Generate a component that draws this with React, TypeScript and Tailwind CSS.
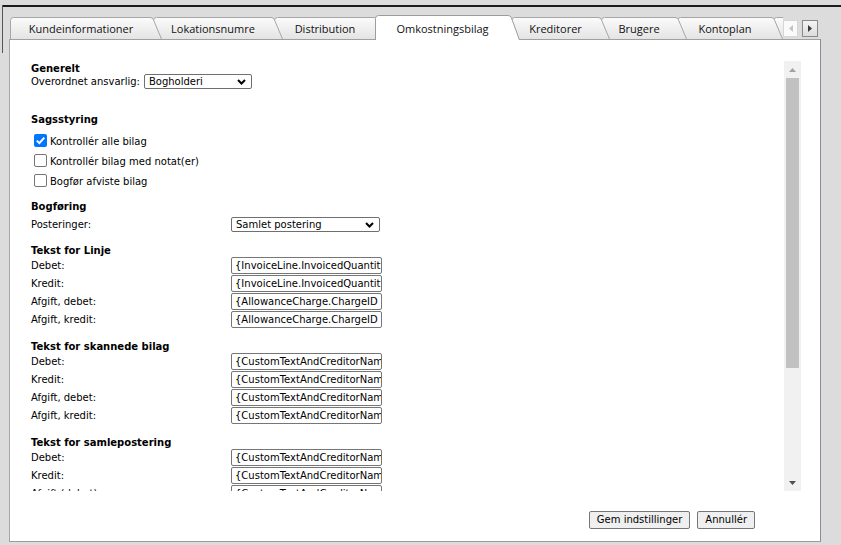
import React from "react";

type TabDef = { label: string; w: number; cls: string; active?: boolean };

const tabs: TabDef[] = [
  { label: "Kundeinformationer", w: 152, cls: "w-[152px] z-[8]" },
  { label: "Lokationsnumre", w: 130, cls: "w-[130px] -ml-[9px] z-[7]" },
  { label: "Distribution", w: 112, cls: "w-[112px] -ml-[9px] z-[6]" },
  { label: "Omkostningsbilag", w: 145, cls: "w-[145px] -ml-[11px] z-[9]", active: true },
  { label: "Kreditorer", w: 99, cls: "w-[99px] -ml-[9px] z-[5]" },
  { label: "Brugere", w: 86, cls: "w-[86px] -ml-[9px] z-[4]" },
  { label: "Kontoplan", w: 106, cls: "w-[106px] -ml-[10px] z-[3]" },
  { label: "", w: 60, cls: "w-[60px] -ml-[10px] z-[2]" },
];

function Tab({ tab, idx }: { tab: TabDef; idx: number }) {
  const h = tab.active ? 25 : 22;
  const w = tab.w;
  const outline = `M0.5 ${h} L0.5 3.5 Q0.5 0.5 3.5 0.5 L${w - 12} 0.5 Q${w - 9.5} 0.5 ${w - 8.7} 2.5 L${w - 0.5} ${h}`;
  return (
    <div
      className={`relative shrink-0 ${tab.cls} ${
        tab.active ? "h-[25px] pt-[3px]" : "h-[22px] mt-[2px] pt-[2px]"
      }`}
    >
      <svg className="absolute inset-0" width={w} height={h}>
        <defs>
          <linearGradient id={`tabg${idx}`} x1="0" y1="0" x2="0" y2="1">
            <stop offset="0" stopColor="#fbfbfb" />
            <stop offset="1" stopColor="#e4e4e4" />
          </linearGradient>
        </defs>
        <path d={outline + " Z"} fill={tab.active ? "#ffffff" : `url(#tabg${idx})`} />
        <path d={outline} fill="none" stroke={tab.active ? "#9c9c9c" : "#a6a6a6"} />
      </svg>
      <div className="relative h-full flex items-center justify-center pr-[10px] font-['Open_Sans',sans-serif] text-[11px] text-[#111] whitespace-nowrap">
        {tab.label}
      </div>
    </div>
  );
}

function Chevron() {
  return (
    <svg width="9" height="6" viewBox="0 0 9 6">
      <polyline points="1,1 4.5,4.5 8,1" fill="none" stroke="#000" strokeWidth="2" />
    </svg>
  );
}

function Select({ value, cls }: { value: string; cls: string }) {
  return (
    <div
      className={`h-[15px] border border-[#6f6f6f] rounded-[2px] bg-white flex items-center justify-between pl-[4px] pr-[5px] ${cls}`}
    >
      <span className="leading-[13px]">{value}</span>
      <Chevron />
    </div>
  );
}

function Check({ checked, label }: { checked?: boolean; label: string }) {
  return (
    <div className="h-[20px] flex items-start">
      {checked ? (
        <div className="ml-[3px] mt-[3.5px] w-[13px] h-[13px] rounded-[2px] bg-[#0075ff] flex items-center justify-center">
          <svg width="13" height="13" viewBox="0 0 13 13">
            <path d="M2.8 6.6 L5.4 9.1 L10.3 3.6" fill="none" stroke="#fff" strokeWidth="2" />
          </svg>
        </div>
      ) : (
        <div className="ml-[3px] mt-[3.5px] w-[13px] h-[13px] rounded-[2px] border border-[#767676] bg-white" />
      )}
      <span className="ml-[3px] mt-[5px] leading-[13px]">{label}</span>
    </div>
  );
}

function Heading({ children, cls = "" }: { children: React.ReactNode; cls?: string }) {
  return <div className={`h-[12px] pt-[1px] font-bold leading-[12px] ${cls}`}>{children}</div>;
}

function Field({ label, value }: { label: string; value: string }) {
  return (
    <div className="h-[18px] flex items-start">
      <span className="w-[200px] mt-[3px] leading-[13px] shrink-0">{label}</span>
      <div className="w-[151px] h-[17px] mt-[0.5px] border border-[#767676] rounded-[2px] bg-white px-[3px] overflow-hidden whitespace-nowrap leading-[15px]">
        {value}
      </div>
    </div>
  );
}

const linje = [
  ["Debet:", "{InvoiceLine.InvoicedQuantity} x {InvoiceLine.Item.Name}"],
  ["Kredit:", "{InvoiceLine.InvoicedQuantity} x {InvoiceLine.Item.Name}"],
  ["Afgift, debet:", "{AllowanceCharge.ChargeID  {AllowanceCharge.Reason}}"],
  ["Afgift, kredit:", "{AllowanceCharge.ChargeID  {AllowanceCharge.Reason}}"],
];

const custom = "{CustomTextAndCreditorName}";

export default function App() {
  return (
    <div className="w-[841px] h-[545px] bg-[#dcdcdc] overflow-hidden relative font-['DejaVu_Sans',sans-serif] text-[10px] text-black">
      <div className="absolute left-[2px] top-[5px] w-px h-[48px] bg-[#555]" />
      <div className="mt-[5px] ml-[2px] border-t-2 border-[#1c1c1c]">
        {/* tab strip */}
        <div className="ml-[8px] mt-[8px] h-[25px] flex relative z-10">
          <div className="w-[773px] h-[25px] flex items-start overflow-hidden">
            {tabs.map((t, i) => (
              <Tab key={i} tab={t} idx={i} />
            ))}
          </div>
          <div className="flex items-start gap-[4px] pt-[5px]">
            <div className="w-[15px] h-[17px] border border-[#d6d6d6] bg-[#fafafa] flex items-center justify-center">
              <svg width="4" height="7" viewBox="0 0 4 7">
                <path d="M4 0 L0 3.5 L4 7 Z" fill="#c4c4c4" />
              </svg>
            </div>
            <div className="w-[16px] h-[17px] border border-[#8a8a8a] bg-gradient-to-b from-[#f4f4f4] to-[#dcdcdc] flex items-center justify-center">
              <svg width="4" height="7" viewBox="0 0 4 7">
                <path d="M0 0 L4 3.5 L0 7 Z" fill="#3c3c3c" />
              </svg>
            </div>
          </div>
        </div>

        {/* panel */}
        <div className="ml-[7px] -mt-[1px] w-[812px] h-[503px] bg-white border border-t-[#a0a0a0] border-l-[#a6a6a6] border-r-[#8b8a9b] border-b-[#9c9c9c] flex flex-col">
          <div className="mt-[21px] h-[430px] flex">
            <div className="flex-1 overflow-hidden pl-[21px] pt-[1px]">
              <Heading>Generelt</Heading>
              <div className="h-[15px] flex items-center">
                <span className="leading-[13px]">Overordnet ansvarlig:</span>
                <Select value="Bogholderi" cls="ml-[4px] w-[108px]" />
              </div>

              <Heading cls="mt-[24px]">Sagsstyring</Heading>
              <div className="mt-[5px]">
                <Check checked label="Kontrollér alle bilag" />
                <Check label="Kontrollér bilag med notat(er)" />
                <Check label="Bogfør afviste bilag" />
              </div>

              <Heading cls="mt-[10px]">Bogføring</Heading>
              <div className="mt-[5px] h-[15px] flex items-center">
                <span className="w-[200px] leading-[13px] shrink-0">Posteringer:</span>
                <Select value="Samlet postering" cls="w-[149px]" />
              </div>

              <Heading cls="mt-[12px]">Tekst for Linje</Heading>
              {linje.map(([l, v]) => (
                <Field key={l} label={l} value={v} />
              ))}

              <Heading cls="mt-[12px]">Tekst for skannede bilag</Heading>
              <Field label="Debet:" value={custom} />
              <Field label="Kredit:" value={custom} />
              <Field label="Afgift, debet:" value={custom} />
              <Field label="Afgift, kredit:" value={custom} />

              <Heading cls="mt-[12px]">Tekst for samlepostering</Heading>
              <Field label="Debet:" value={custom} />
              <Field label="Kredit:" value={custom} />
              <Field label="Afgift (debet):" value={custom} />
              <Field label="Afgift (kredit):" value={custom} />
            </div>

            {/* scrollbar */}
            <div className="w-[17px] mr-[19px] bg-[#f1f1f1] flex flex-col items-center">
              <div className="h-[17px] flex items-center justify-center">
                <svg width="7" height="4" viewBox="0 0 7 4">
                  <path d="M0 4 L3.5 0 L7 4 Z" fill="#a3a3a3" />
                </svg>
              </div>
              <div className="w-[13px] h-[290px] bg-[#c1c1c1]" />
              <div className="flex-1" />
              <div className="h-[17px] flex items-center justify-center">
                <svg width="7" height="4" viewBox="0 0 7 4">
                  <path d="M0 0 L7 0 L3.5 4 Z" fill="#505050" />
                </svg>
              </div>
            </div>
          </div>

          <div className="pt-[20px] pr-[65px] flex justify-end gap-[7px]">
            <button className="h-[18px] px-[7px] border border-[#767676] rounded-[2px] bg-[#efefef] leading-[16px] text-[10px]">
              Gem indstillinger
            </button>
            <button className="h-[18px] px-[7px] border border-[#767676] rounded-[2px] bg-[#efefef] leading-[16px] text-[10px]">
              Annullér
            </button>
          </div>
        </div>
      </div>
    </div>
  );
}
